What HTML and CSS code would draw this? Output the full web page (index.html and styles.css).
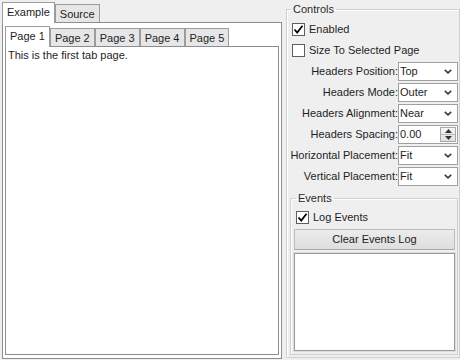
FILE: index.html
```html
<!DOCTYPE html>
<html lang="en">
<head>
<meta charset="UTF-8">
<title>Tab Control</title>
<link rel="stylesheet" href="styles.css">
</head>
<body>

<div class="left">
    <div class="tabbar">
        <div class="tab active">Example</div>
        <div class="tab">Source</div>
    </div>
    <div class="panel outer">
        <div class="tabbar">
            <div class="tab active">Page 1</div>
            <div class="tab">Page 2</div>
            <div class="tab">Page 3</div>
            <div class="tab">Page 4</div>
            <div class="tab">Page 5</div>
        </div>
        <div class="panel page">This is the first tab page.</div>
    </div>
</div>

<fieldset class="group controls">
    <legend>Controls</legend>
    <div class="check-row first">
        <span class="check"><svg width="11" height="11" viewBox="0 0 11 11"><path d="M1.5 5.5 L4.2 8.5 L9.5 1.8" fill="none" stroke="#000" stroke-width="1.8"/></svg></span>Enabled
    </div>
    <div class="check-row">
        <span class="check"></span>Size To Selected Page
    </div>

    <div class="form">
        <span class="field-label">Headers Position:</span>
        <div class="select">Top<svg class="chev" width="8" height="5" viewBox="0 0 8 5"><path d="M0.8 0.8 L4 3.8 L7.2 0.8" fill="none" stroke="#3a3a3a" stroke-width="1.6"/></svg></div>

        <span class="field-label">Headers Mode:</span>
        <div class="select">Outer<svg class="chev" width="8" height="5" viewBox="0 0 8 5"><path d="M0.8 0.8 L4 3.8 L7.2 0.8" fill="none" stroke="#3a3a3a" stroke-width="1.6"/></svg></div>

        <span class="field-label">Headers Alignment:</span>
        <div class="select">Near<svg class="chev" width="8" height="5" viewBox="0 0 8 5"><path d="M0.8 0.8 L4 3.8 L7.2 0.8" fill="none" stroke="#3a3a3a" stroke-width="1.6"/></svg></div>

        <span class="field-label">Headers Spacing:</span>
        <div class="select spin">0.00
            <div class="spin-btns">
                <div class="spin-btn"><svg width="7" height="4" viewBox="0 0 7 4"><path d="M0 4 L3.5 0 L7 4 Z" fill="#333"/></svg></div>
                <div class="spin-btn"><svg width="7" height="4" viewBox="0 0 7 4"><path d="M0 0 L3.5 4 L7 0 Z" fill="#333"/></svg></div>
            </div>
        </div>

        <span class="field-label">Horizontal Placement:</span>
        <div class="select">Fit<svg class="chev" width="8" height="5" viewBox="0 0 8 5"><path d="M0.8 0.8 L4 3.8 L7.2 0.8" fill="none" stroke="#3a3a3a" stroke-width="1.6"/></svg></div>

        <span class="field-label">Vertical Placement:</span>
        <div class="select">Fit<svg class="chev" width="8" height="5" viewBox="0 0 8 5"><path d="M0.8 0.8 L4 3.8 L7.2 0.8" fill="none" stroke="#3a3a3a" stroke-width="1.6"/></svg></div>
    </div>

    <fieldset class="group events">
        <legend>Events</legend>
        <div class="check-row log-row">
            <span class="check"><svg width="11" height="11" viewBox="0 0 11 11"><path d="M1.5 5.5 L4.2 8.5 L9.5 1.8" fill="none" stroke="#000" stroke-width="1.8"/></svg></span>Log Events
        </div>
        <div class="button">Clear Events Log</div>
        <div class="log"></div>
    </fieldset>
</fieldset>

</body>
</html>
```

FILE: styles.css
```css
html, body {
    margin: 0;
    height: 360px;
}
body {
    display: flex;
    background-color: #efefef;
    font-family: "Liberation Sans", Arial, sans-serif;
    font-size: 11px;
    line-height: 13px;
    color: #1e1e1e;
    overflow: hidden;
}

/* left side: nested tab controls */
.left {
    width: 280px;
    padding: 2px 0 0 2px;
    display: flex;
    flex-direction: column;
}
.tabbar {
    display: flex;
    align-items: flex-end;
    height: 20px;
    position: relative;
    z-index: 1;
}
.tab {
    box-sizing: border-box;
    height: 18px;
    padding: 3px 4px 0;
    border: 1px solid #9c9c9c;
    border-bottom: none;
    background-color: #e6e6e6;
    white-space: nowrap;
}
.tab.active {
    height: 21px;
    margin-bottom: -1px;
    background-color: #fff;
}
.panel {
    border: 1px solid #8c8c92;
    background-color: #fff;
}
.outer {
    flex: 1;
    margin-bottom: 1px;
    padding: 3px 2px;
    display: flex;
    flex-direction: column;
}
.page {
    flex: 1;
    padding: 2px 2px;
}

/* right side: settings */
.group {
    margin: 0;
    border: 1px solid #d0d0d0;
    box-shadow: inset 1px 1px 0 #fff;
    min-width: 0;
}
.group legend {
    padding: 0 2px;
    color: #2a2a2a;
}
.controls {
    width: 174px;
    box-sizing: border-box;
    margin: 3px 0 2px 4px;
    padding: 0 1px 2px 3px;
    display: flex;
    flex-direction: column;
}
.controls > legend {
    margin-left: 1px;
}
.check-row {
    display: flex;
    align-items: center;
    height: 21px;
    margin-left: 2px;
}
.check-row.first {
    margin-top: 3px;
}
.check-row.log-row {
    margin-top: 2px;
}
.check {
    box-sizing: border-box;
    width: 13px;
    height: 13px;
    margin-right: 4px;
    border: 1px solid #5e5e5e;
    background-color: #fff;
    display: flex;
    align-items: center;
    justify-content: center;
}
.form {
    display: grid;
    grid-template-columns: 1fr 60px;
    grid-auto-rows: 19px;
    row-gap: 2px;
    margin-top: 1px;
}
.field-label {
    text-align: right;
    align-self: center;
    white-space: nowrap;
}
.select {
    box-sizing: border-box;
    display: flex;
    align-items: center;
    justify-content: space-between;
    padding-left: 1px;
    border: 1px solid #a0a0a0;
    background-color: #fff;
}
.chev {
    margin-right: 5px;
}
.spin {
    padding-right: 1px;
}
.spin-btns {
    box-sizing: border-box;
    width: 16px;
    height: 15px;
    border: 1px solid #a8a8a8;
    background: linear-gradient(#f4f4f4, #e0e0e0);
    display: flex;
    flex-direction: column;
}
.spin-btn {
    flex: 1;
    display: flex;
    align-items: center;
    justify-content: center;
}
.spin-btn + .spin-btn {
    border-top: 1px solid #b8b8b8;
}
.events {
    flex: 1;
    margin: 6px 0 0 0;
    padding: 0 2px 3px 3px;
    display: flex;
    flex-direction: column;
}
.events > legend {
    margin-left: 2px;
}
.button {
    box-sizing: border-box;
    height: 21px;
    margin-top: 1px;
    border: 1px solid #bcbcbc;
    border-bottom-color: #a8a8a8;
    background: linear-gradient(#ececec, #dedede);
    display: flex;
    align-items: center;
    justify-content: center;
    color: #222;
}
.log {
    flex: 1;
    margin-top: 3px;
    border: 1px solid #9a9a9a;
    box-shadow: 0 0 0 1px #dcdcdc;
    background-color: #fff;
}
```
